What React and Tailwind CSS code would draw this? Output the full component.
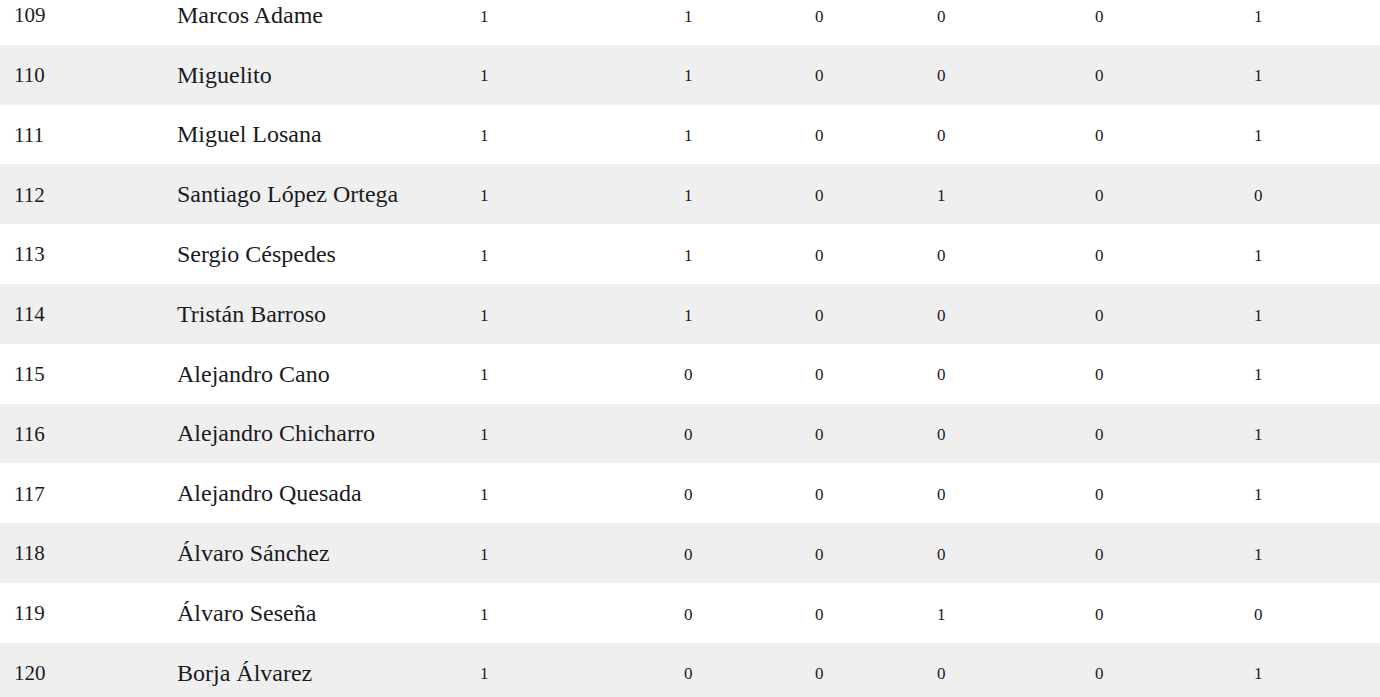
import React from 'react';

const rows = [
  [109, 'Marcos Adame', 1, 1, 0, 0, 0, 1],
  [110, 'Miguelito', 1, 1, 0, 0, 0, 1],
  [111, 'Miguel Losana', 1, 1, 0, 0, 0, 1],
  [112, 'Santiago López Ortega', 1, 1, 0, 1, 0, 0],
  [113, 'Sergio Céspedes', 1, 1, 0, 0, 0, 1],
  [114, 'Tristán Barroso', 1, 1, 0, 0, 0, 1],
  [115, 'Alejandro Cano', 1, 0, 0, 0, 0, 1],
  [116, 'Alejandro Chicharro', 1, 0, 0, 0, 0, 1],
  [117, 'Alejandro Quesada', 1, 0, 0, 0, 0, 1],
  [118, 'Álvaro Sánchez', 1, 0, 0, 0, 0, 1],
  [119, 'Álvaro Seseña', 1, 0, 0, 1, 0, 0],
  [120, 'Borja Álvarez', 1, 0, 0, 0, 0, 1],
];

const App = () => {
  return (
    <div className="w-[1380px] h-[697px] overflow-hidden bg-white">
      <table
        className="w-full -mt-[15px] border-collapse text-left text-[#1a1a22]"
        style={{ fontFamily: '"Liberation Serif", "DejaVu Serif", serif' }}
      >
        <colgroup>
          <col className="w-[163px]" />
          <col className="w-[303px]" />
          <col className="w-[204px]" />
          <col className="w-[131px]" />
          <col className="w-[122px]" />
          <col className="w-[158px]" />
          <col className="w-[159px]" />
          <col className="w-[140px]" />
        </colgroup>
        <tbody>
          {rows.map((r, i) => (
            <tr key={r[0]} className={`h-[59.8px] ${i % 2 === 1 ? 'bg-[#efefef]' : 'bg-white'}`}>
              {/* id */}
              <td className="pl-[14px] pt-[2px] text-[21px]">{r[0]}</td>
              {/* name */}
              <td className="pl-[14px] text-[24px]">{r[1]}</td>
              {r.slice(2).map((v, idx) => (
                <td key={idx} className="pl-[14px] pt-[3px] text-[17px]">
                  {v}
                </td>
              ))}
            </tr>
          ))}
        </tbody>
      </table>
    </div>
  );
};

export default App;
